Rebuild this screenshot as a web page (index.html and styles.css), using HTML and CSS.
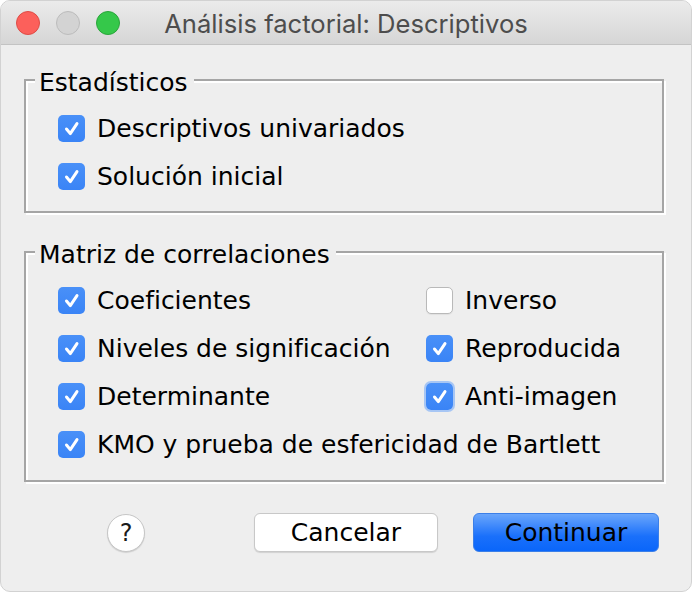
FILE: index.html
```html
<!DOCTYPE html>
<html lang="es">
<head>
<meta charset="utf-8">
<title>Análisis factorial: Descriptivos</title>
<link rel="stylesheet" href="styles.css">
</head>
<body>
<div class="window">
  <div class="titlebar">
    <div class="lights">
      <span class="light red"></span>
      <span class="light gray"></span>
      <span class="light green"></span>
    </div>
    <div class="title">Análisis factorial: Descriptivos</div>
    <div></div>
  </div>
  <div class="content">
    <fieldset class="group g1">
      <legend>Estadísticos</legend>
      <div class="rows">
        <div class="row"><span class="cb on"><svg viewBox="0 0 27 27"><path d="M8.5 14 L12.3 18.6 L19 8.6"/></svg></span><span>Descriptivos univariados</span></div>
        <div class="row"><span class="cb on"><svg viewBox="0 0 27 27"><path d="M8.5 14 L12.3 18.6 L19 8.6"/></svg></span><span>Solución inicial</span></div>
      </div>
    </fieldset>
    <fieldset class="group g2">
      <legend>Matriz de correlaciones</legend>
      <div class="grid">
        <div class="row"><span class="cb on"><svg viewBox="0 0 27 27"><path d="M8.5 14 L12.3 18.6 L19 8.6"/></svg></span><span>Coeficientes</span></div>
        <div class="row"><span class="cb off"></span><span>Inverso</span></div>
        <div class="row"><span class="cb on"><svg viewBox="0 0 27 27"><path d="M8.5 14 L12.3 18.6 L19 8.6"/></svg></span><span>Niveles de significación</span></div>
        <div class="row"><span class="cb on"><svg viewBox="0 0 27 27"><path d="M8.5 14 L12.3 18.6 L19 8.6"/></svg></span><span>Reproducida</span></div>
        <div class="row"><span class="cb on"><svg viewBox="0 0 27 27"><path d="M8.5 14 L12.3 18.6 L19 8.6"/></svg></span><span>Determinante</span></div>
        <div class="row"><span class="cb on focus"><svg viewBox="0 0 27 27"><path d="M8.5 14 L12.3 18.6 L19 8.6"/></svg></span><span>Anti-imagen</span></div>
        <div class="row span2"><span class="cb on"><svg viewBox="0 0 27 27"><path d="M8.5 14 L12.3 18.6 L19 8.6"/></svg></span><span>KMO y prueba de esfericidad de Bartlett</span></div>
      </div>
    </fieldset>
    <div class="buttons">
      <div class="help">?</div>
      <div class="btn cancel">Cancelar</div>
      <div class="btn primary">Continuar</div>
    </div>
  </div>
</div>
</body>
</html>
```
FILE: styles.css
```css
html, body {
  margin: 0;
  padding: 0;
  background: #ffffff;
}

.window {
  box-sizing: border-box;
  width: 692px;
  height: 592px;
  border: 1px solid #d2d2d2;
  border-radius: 10px;
  overflow: hidden;
  background: #eeeeee;
  font-family: "DejaVu Sans", sans-serif;
  color: #000;
}

.titlebar {
  height: 43px;
  border-bottom: 1px solid #c3c3c3;
  background: linear-gradient(#ebebeb, #d6d6d6);
  display: grid;
  grid-template-columns: 1fr auto 1fr;
  align-items: center;
}

.lights {
  display: flex;
  gap: 16px;
  padding-left: 15px;
}

.light {
  box-sizing: border-box;
  width: 24px;
  height: 24px;
  border-radius: 50%;
}

.red { background: #fc605b; border: 1px solid #de4c46; }
.gray { background: #d3d3d3; border: 1px solid #bcbcbc; }
.green { background: #35c84a; border: 1px solid #2aa53b; }

.title {
  font-family: Inter, "Liberation Sans", sans-serif;
  font-size: 25.6px;
  color: #4d4d4d;
  padding-top: 1px;
}

.content {
  padding: 18px 27px 0 23px;
}

.group {
  margin: 0;
  border: 2px solid #a5a5a5;
  box-shadow: inset 2px 2px 0 #fff, 2px 2px 0 #fff;
  min-width: 0;
}

.g1 {
  padding: 7px 0 11px 0;
}

.g2 {
  margin-top: 22px;
  padding: 7px 0 12px 0;
}

.rows,
.grid {
  padding-left: 32px;
}

legend {
  margin-left: 9px;
  padding: 6px 6px 0 4px;
  line-height: 28px;
  font-size: 25px;
  background: #eeeeee;
}

.row {
  display: flex;
  align-items: center;
  gap: 12px;
  height: 48px;
  font-size: 25px;
  white-space: nowrap;
}

.grid {
  display: grid;
  grid-template-columns: 368px auto;
}

.span2 {
  grid-column: 1 / 3;
}

.cb {
  box-sizing: border-box;
  width: 27px;
  height: 27px;
  border-radius: 5px;
  flex: none;
  display: block;
}

.cb svg {
  display: block;
  width: 27px;
  height: 27px;
}

.cb path {
  fill: none;
  stroke: #fff;
  stroke-width: 3;
  stroke-linecap: round;
  stroke-linejoin: round;
}

.cb.on {
  background: linear-gradient(#4990f8, #3a84f6);
}

.cb.off {
  background: #fff;
  border: 1px solid #b9b9b9;
  box-shadow: 0 1px 1px rgba(0,0,0,0.06);
}

.cb.focus {
  box-shadow: 0 0 0 2px rgba(110, 165, 250, 0.55);
}

.buttons {
  margin-top: 31px;
  display: flex;
  align-items: center;
  padding-left: 83px;
  padding-right: 5px;
}

.help {
  box-sizing: border-box;
  width: 38px;
  height: 38px;
  border-radius: 50%;
  background: #fff;
  border: 1px solid #c6c6c6;
  box-shadow: 0 1px 1px rgba(0,0,0,0.12);
  display: flex;
  align-items: center;
  justify-content: center;
  font-size: 24px;
  color: #1a1a1a;
}

.btn {
  box-sizing: border-box;
  height: 39px;
  border-radius: 6px;
  display: flex;
  align-items: center;
  justify-content: center;
  font-size: 25px;
  color: #000;
}

.cancel {
  margin-left: auto;
  width: 184px;
  background: #fff;
  border: 1px solid #c8c8c8;
  box-shadow: 0 1px 1px rgba(0,0,0,0.12);
}

.primary {
  margin-left: 35px;
  width: 186px;
  background: linear-gradient(#6aa6fb, #1a70fb 60%, #0a66fa);
  border: 1px solid #3b7fe8;
}
```
